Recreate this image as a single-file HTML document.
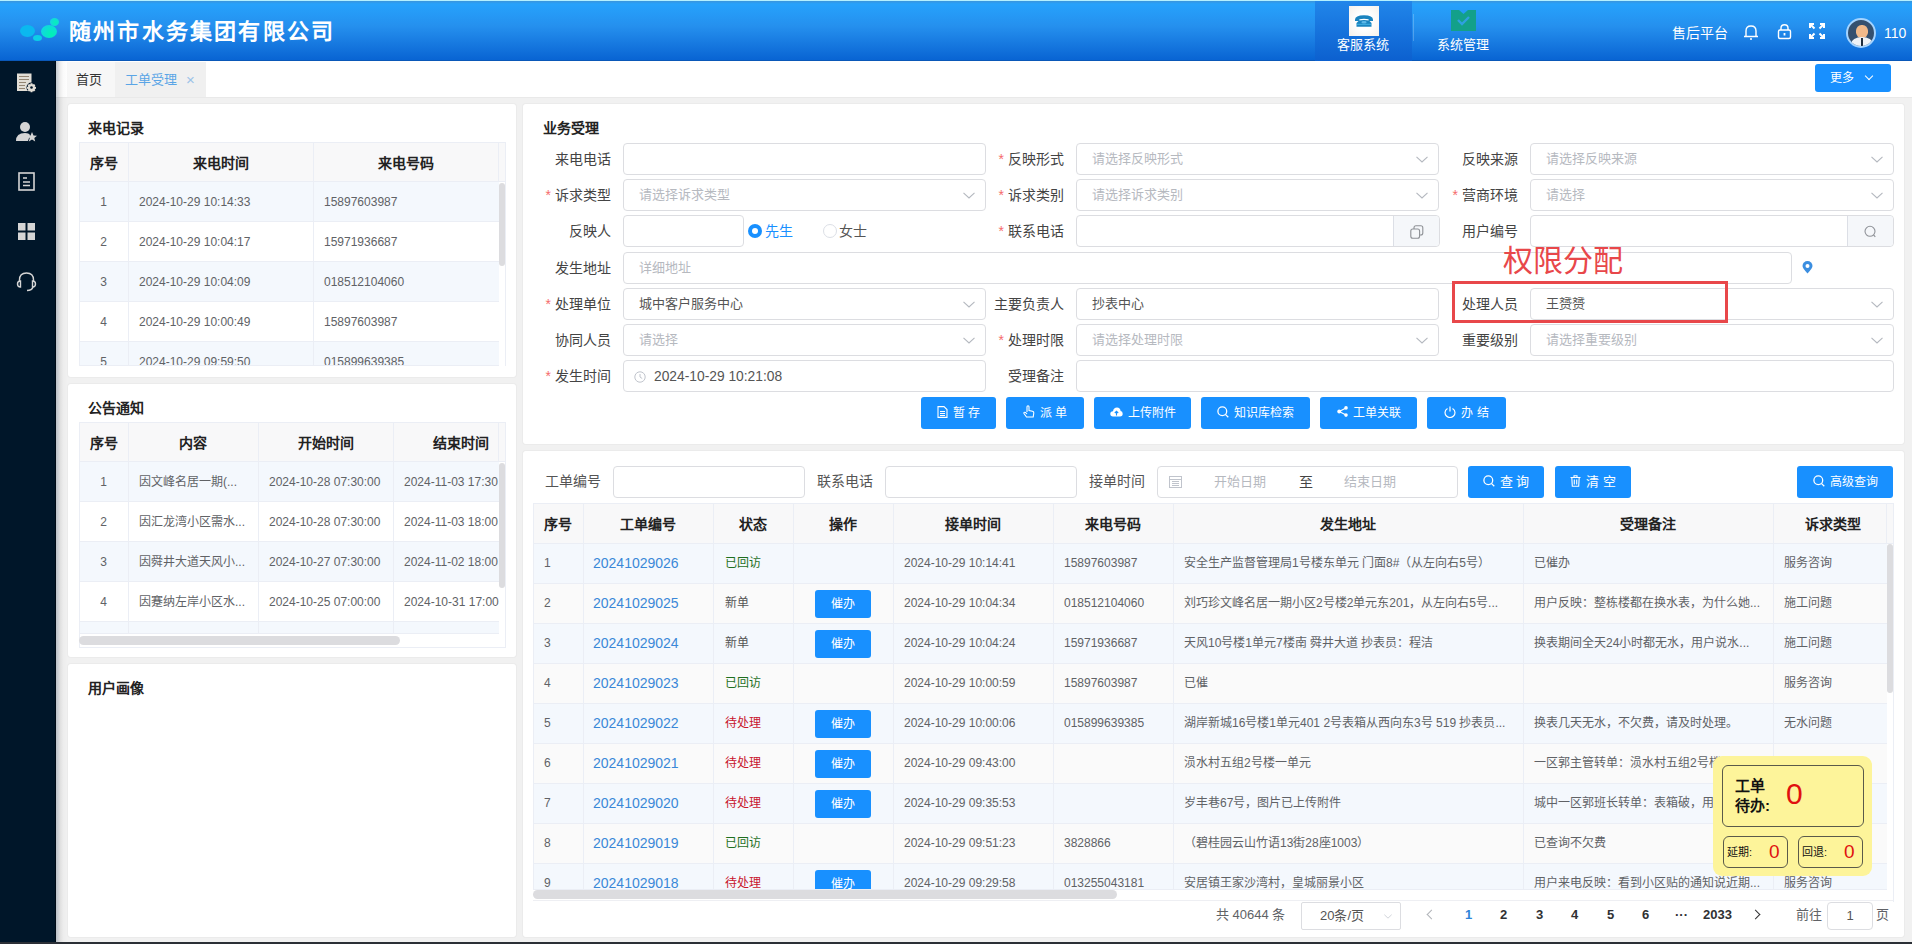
<!DOCTYPE html><html lang="zh-CN"><head><meta charset="utf-8"><style>
*{box-sizing:border-box;margin:0;padding:0}
html,body{width:1912px;height:944px;overflow:hidden;background:#f1f1f1;font-family:"Liberation Sans",sans-serif;color:#606266}
.ab{position:absolute}
.hdr{left:0;top:0;width:1912px;height:61px;background:linear-gradient(#3a95dc 0px,#26a2fc 3px,#2590ee 25px,#1576de 45px,#0864d3 100%);border-top:1px solid #b4f0ff;border-bottom:1px solid #0a58b8}
.side{left:0;top:61px;width:56px;height:883px;background:#001629;border-right:1px solid #000b16}
.tabs{left:56px;top:61px;width:1856px;height:37px;background:#fff;border-bottom:1px solid #e9e9e9}
.pnl{background:#fff;border-radius:3px;box-shadow:0 0 0 1px #ebebeb}
.t14b{font-size:14px;font-weight:bold;color:#222}
.tbl{border:1px solid #ebeef5;overflow:hidden}
.cell{position:absolute;white-space:nowrap;overflow:hidden}
.lbl{position:absolute;font-size:14px;color:#444;text-align:right;line-height:32px;height:32px;white-space:nowrap}
.star{color:#f56c6c;margin-right:4px}
.inp{position:absolute;height:32px;border:1px solid #dcdde1;border-radius:4px;background:#fff;font-size:13px;line-height:30px;padding-left:15px;white-space:nowrap;color:#555}
.ph{color:#b6b9bf}
.arr{position:absolute;right:10px;top:12px;width:12px;height:7px}
.btn{position:absolute;height:32px;background:#1890ff;border-radius:3px;color:#fff;font-weight:500;font-size:12px;line-height:32px;text-align:center;white-space:nowrap}
.th{position:absolute;font-size:14px;font-weight:bold;color:#222;text-align:center;white-space:nowrap}
.td{position:absolute;font-size:12px;color:#555;white-space:nowrap;overflow:hidden}
</style></head><body>
<div class="ab hdr"></div>
<div class="ab" style="left:20px;top:25px;width:15px;height:12px;border-radius:50%;background:#0bb8ef"></div>
<div class="ab" style="left:33px;top:35px;width:9px;height:6px;border-radius:50%;background:#0ccfe6"></div>
<div class="ab" style="left:41px;top:25px;width:16px;height:13px;border-radius:50%;background:radial-gradient(circle at 65% 70%,#00f2b4,#12d6e2 80%)"></div>
<div class="ab" style="left:50px;top:18px;width:9px;height:8px;border-radius:50%;background:radial-gradient(circle at 60% 55%,#06eebb,#18d2e6 90%)"></div>
<div class="ab" style="left:69px;top:16px;font-size:22px;font-weight:bold;color:#fff;letter-spacing:2.2px;line-height:32px">随州市水务集团有限公司</div>
<div class="ab" style="left:1315px;top:1px;width:97px;height:60px;background:linear-gradient(#2186ea,#0c60cf)"></div>
<div class="ab" style="left:1413px;top:14px;width:1px;height:27px;background:rgba(255,255,255,0.22)"></div>
<div class="ab" style="left:1349px;top:6px;width:30px;height:30px;background:radial-gradient(circle,#ffffff 40%,#f6f1ea 100%)"></div>
<svg class="ab" style="left:1355px;top:15px" width="18" height="12" viewBox="0 0 18 12"><path d="M0 4.8 Q0 0.3 9 0.3 Q18 0.3 18 4.8 L18 6 L13.6 6 L13.6 4.2 Q9 3.2 4.4 4.2 L4.4 6 L0 6 Z" fill="#1b84bf"/><path d="M4 5.6 Q9 4.3 14 5.6 L16.5 8 L16.5 11.7 L1.5 11.7 L1.5 8 Z" fill="#1b84bf"/><path d="M2 9.3 H16" stroke="#4fc0ee" stroke-width="0.8"/><ellipse cx="9" cy="7.3" rx="2.6" ry="1.2" fill="#5cb8e8"/></svg>
<div class="ab" style="left:1337px;top:37px;font-size:13px;font-weight:500;color:#fff;line-height:16px">客服系统</div>
<svg class="ab" style="left:1451px;top:10px" width="25" height="21" viewBox="0 0 25 21"><path d="M0 0 L8 0 L12.5 4 L17 0 L25 0 L25 21 L0 21 Z" fill="#13a08a"/><path d="M7 10 L11 14 L18 7" stroke="#2fa0e0" stroke-width="2.4" fill="none"/></svg>
<div class="ab" style="left:1437px;top:37px;font-size:13px;font-weight:500;color:#fff;line-height:16px">系统管理</div>
<div class="ab" style="left:1672px;top:25px;font-size:14px;font-weight:500;color:#fff;line-height:17px">售后平台</div>
<svg class="ab" style="left:1742px;top:23px" width="18" height="18" viewBox="0 0 18 18" fill="none" stroke="#fff" stroke-width="1.4"><path d="M4 13 L4 8 Q4 3 9 3 Q14 3 14 8 L14 13 M2 13.5 L16 13.5"/><path d="M8 16 L10 16"/></svg>
<svg class="ab" style="left:1776px;top:23px" width="17" height="17" viewBox="0 0 17 17" fill="none" stroke="#fff" stroke-width="1.4"><path d="M5 7 L5 5 Q5 1.8 8.5 1.8 Q12 1.8 12 5 L12 7"/><rect x="2.5" y="7" width="12" height="8.5" rx="1.5"/><path d="M8.5 10 L8.5 12.5" stroke-width="1.8"/></svg>
<svg class="ab" style="left:1808px;top:22px" width="18" height="18" viewBox="0 0 18 18" fill="none" stroke="#fff" stroke-width="2"><path d="M2 6 L2 2 L6 2 M2 2 L6.5 6.5"/><path d="M12 2 L16 2 L16 6 M16 2 L11.5 6.5"/><path d="M2 12 L2 16 L6 16 M2 16 L6.5 11.5"/><path d="M16 12 L16 16 L12 16 M16 16 L11.5 11.5"/></svg>
<div class="ab" style="left:1846px;top:18px;width:30px;height:30px;border-radius:50%;background:#34506f;border:2px solid #a5d4ff;overflow:hidden"><div class="ab" style="left:8px;top:5px;width:12px;height:13px;border-radius:45%;background:#f0b98a"></div><div class="ab" style="left:3px;top:17px;width:22px;height:14px;border-radius:50% 50% 0 0;background:#eef2f6"></div><div class="ab" style="left:13px;top:18px;width:2px;height:10px;background:#1d2c3c"></div></div>
<div class="ab" style="left:1884px;top:25px;font-size:14px;color:#fff;line-height:17px">110</div>
<div class="ab side"></div>
<svg class="ab" style="left:16px;top:73px" width="21" height="20" viewBox="0 0 21 20"><rect x="1" y="0.5" width="14.5" height="17.5" fill="#e2ded6"/><path d="M3 3.5h10M3 6.5h10M3 9.5h7M3 12.5h6M3 15.5h6" stroke="#8a7a66" stroke-width="0.9"/><g transform="translate(15.5 14.5)"><circle r="5" fill="#001629"/><path d="M-0.9 -4.2h1.8l0.4 1.3 1.2 -0.6 1.3 1.3 -0.6 1.2 1.3 0.4v1.8l-1.3 0.4 0.6 1.2 -1.3 1.3 -1.2 -0.6 -0.4 1.3h-1.8l-0.4 -1.3 -1.2 0.6 -1.3 -1.3 0.6 -1.2 -1.3 -0.4v-1.8l1.3 -0.4 -0.6 -1.2 1.3 -1.3 1.2 0.6z" fill="#e2ded6"/><circle r="1.3" fill="#001629"/></g></svg>
<svg class="ab" style="left:16px;top:121px" width="22" height="21" viewBox="0 0 22 21"><circle cx="9" cy="6" r="5" fill="#d5d5d5"/><path d="M0 20 Q0 12 9 12 Q13 12 14 14 L12 20 Z" fill="#d5d5d5"/><path d="M16 11 L17.5 14.5 L21 14.8 L18.3 17 L19.2 20.5 L16 18.5 L12.8 20.5 L13.7 17 L11 14.8 L14.5 14.5 Z" fill="#d5d5d5"/></svg>
<svg class="ab" style="left:18px;top:172px" width="17" height="19" viewBox="0 0 17 19" fill="none" stroke="#d5d5d5" stroke-width="1.6"><rect x="1" y="1" width="15" height="17"/><path d="M5 6h4M5 10h7M5 13.5h7"/></svg>
<svg class="ab" style="left:18px;top:223px" width="17" height="17" viewBox="0 0 17 17" fill="#d5d5d5"><rect x="0" y="0" width="7.5" height="7.5"/><rect x="9.5" y="0" width="7.5" height="7.5"/><rect x="0" y="9.5" width="7.5" height="7.5"/><rect x="9.5" y="9.5" width="7.5" height="7.5"/></svg>
<svg class="ab" style="left:16px;top:271px" width="21" height="21" viewBox="0 0 21 21" fill="none" stroke="#d5d5d5" stroke-width="1.4"><path d="M3.5 11 L3.5 9 Q3.5 2 10.5 2 Q17.5 2 17.5 9 L17.5 11"/><path d="M4.5 10 Q1.5 10 1.5 13 Q1.5 16 4.5 16 Z"/><path d="M16.5 10 Q19.5 10 19.5 13 Q19.5 16 16.5 16 Z"/><path d="M17 16 Q16 19.5 11 19.5"/></svg>
<div class="ab tabs"></div>
<div class="ab" style="left:67px;top:62px;width:48px;height:35px;background:#f7f7f7"></div>
<div class="ab" style="left:76px;top:71px;font-size:13px;color:#333;line-height:18px">首页</div>
<div class="ab" style="left:115px;top:62px;width:91px;height:35px;background:#f0f0f0"></div>
<div class="ab" style="left:125px;top:71px;font-size:13px;color:#5aa5e6;line-height:18px">工单受理</div>
<div class="ab" style="left:186px;top:71px;font-size:15px;color:#9cc3e8;line-height:18px">×</div>
<div class="ab" style="left:56px;top:61px;width:12px;height:883px;background:linear-gradient(90deg,rgba(20,50,80,0.26),rgba(0,0,0,0.07) 35%,rgba(0,0,0,0.02) 60%,rgba(0,0,0,0))"></div>
<div class="btn" style="left:1815px;top:64px;width:76px;height:28px;line-height:28px;font-size:12px;border-radius:3px;padding-right:4px">更多 <span style="display:inline-block;width:6px;height:6px;border-right:1.3px solid #fff;border-bottom:1.3px solid #fff;transform:rotate(45deg);margin-left:9px;position:relative;top:-3px"></span></div>
<div class="ab pnl" style="left:68px;top:104px;width:448px;height:273px"></div>
<div class="ab t14b" style="left:88px;top:119px;line-height:18px">来电记录</div>
<div class="ab" style="left:79px;top:142px;width:427px;height:40px;background:#f8f8f9;border-top:1px solid #ebeef5;border-bottom:1px solid #ebeef5"></div>
<div class="ab" style="left:79px;top:182px;width:420px;height:40px;background:#f4f8fd;border-bottom:1px solid #ebeef5;overflow:hidden">
<div class="cell" style="left:0px;top:0px;width:49px;height:40px;line-height:40px;font-size:12px;color:#606266;text-align:center;padding-left:0px">1</div>
<div class="cell" style="left:49px;top:0px;width:185px;height:40px;line-height:40px;font-size:12px;color:#606266;text-align:left;padding-left:11px">2024-10-29 10:14:33</div>
<div class="cell" style="left:234px;top:0px;width:185px;height:40px;line-height:40px;font-size:12px;color:#606266;text-align:left;padding-left:11px">15897603987</div>
</div>
<div class="ab" style="left:79px;top:222px;width:420px;height:40px;background:#fff;border-bottom:1px solid #ebeef5;overflow:hidden">
<div class="cell" style="left:0px;top:0px;width:49px;height:40px;line-height:40px;font-size:12px;color:#606266;text-align:center;padding-left:0px">2</div>
<div class="cell" style="left:49px;top:0px;width:185px;height:40px;line-height:40px;font-size:12px;color:#606266;text-align:left;padding-left:11px">2024-10-29 10:04:17</div>
<div class="cell" style="left:234px;top:0px;width:185px;height:40px;line-height:40px;font-size:12px;color:#606266;text-align:left;padding-left:11px">15971936687</div>
</div>
<div class="ab" style="left:79px;top:262px;width:420px;height:40px;background:#f4f8fd;border-bottom:1px solid #ebeef5;overflow:hidden">
<div class="cell" style="left:0px;top:0px;width:49px;height:40px;line-height:40px;font-size:12px;color:#606266;text-align:center;padding-left:0px">3</div>
<div class="cell" style="left:49px;top:0px;width:185px;height:40px;line-height:40px;font-size:12px;color:#606266;text-align:left;padding-left:11px">2024-10-29 10:04:09</div>
<div class="cell" style="left:234px;top:0px;width:185px;height:40px;line-height:40px;font-size:12px;color:#606266;text-align:left;padding-left:11px">018512104060</div>
</div>
<div class="ab" style="left:79px;top:302px;width:420px;height:40px;background:#fff;border-bottom:1px solid #ebeef5;overflow:hidden">
<div class="cell" style="left:0px;top:0px;width:49px;height:40px;line-height:40px;font-size:12px;color:#606266;text-align:center;padding-left:0px">4</div>
<div class="cell" style="left:49px;top:0px;width:185px;height:40px;line-height:40px;font-size:12px;color:#606266;text-align:left;padding-left:11px">2024-10-29 10:00:49</div>
<div class="cell" style="left:234px;top:0px;width:185px;height:40px;line-height:40px;font-size:12px;color:#606266;text-align:left;padding-left:11px">15897603987</div>
</div>
<div class="ab" style="left:79px;top:342px;width:420px;height:24px;background:#f4f8fd;border-bottom:1px solid #ebeef5;overflow:hidden">
<div class="cell" style="left:0px;top:0px;width:49px;height:40px;line-height:40px;font-size:12px;color:#606266;text-align:center;padding-left:0px">5</div>
<div class="cell" style="left:49px;top:0px;width:185px;height:40px;line-height:40px;font-size:12px;color:#606266;text-align:left;padding-left:11px">2024-10-29 09:59:50</div>
<div class="cell" style="left:234px;top:0px;width:185px;height:40px;line-height:40px;font-size:12px;color:#606266;text-align:left;padding-left:11px">015899639385</div>
</div>
<div class="ab" style="left:128px;top:142px;width:1px;height:224px;background:#ebeef5"></div>
<div class="ab" style="left:313px;top:142px;width:1px;height:224px;background:#ebeef5"></div>
<div class="ab" style="left:79px;top:142px;width:1px;height:224px;background:#ebeef5"></div>
<div class="ab" style="left:505px;top:142px;width:1px;height:224px;background:#ebeef5"></div>
<div class="th" style="left:79px;top:143px;width:49px;height:40px;line-height:40px">序号</div>
<div class="th" style="left:128px;top:143px;width:185px;height:40px;line-height:40px">来电时间</div>
<div class="th" style="left:313px;top:143px;width:185px;height:40px;line-height:40px">来电号码</div>
<div class="ab" style="left:498px;top:142px;width:1px;height:40px;background:#ebeef5"></div>
<div class="ab" style="left:499px;top:183px;width:6px;height:83px;border-radius:3px;background:#dcdcdf"></div>
<div class="ab pnl" style="left:68px;top:384px;width:448px;height:273px"></div>
<div class="ab t14b" style="left:88px;top:399px;line-height:18px">公告通知</div>
<div class="ab" style="left:79px;top:422px;width:427px;height:40px;background:#f8f8f9;border-top:1px solid #ebeef5;border-bottom:1px solid #ebeef5"></div>
<div class="ab" style="left:79px;top:462px;width:420px;height:40px;background:#f4f8fd;border-bottom:1px solid #ebeef5;overflow:hidden">
<div class="cell" style="left:0px;top:0px;width:49px;height:40px;line-height:40px;font-size:12px;color:#606266;text-align:center;padding-left:0px">1</div>
<div class="cell" style="left:49px;top:0px;width:130px;height:40px;line-height:40px;font-size:12px;color:#606266;text-align:left;padding-left:11px">因文峰名居一期(...</div>
<div class="cell" style="left:179px;top:0px;width:135px;height:40px;line-height:40px;font-size:12px;color:#606266;text-align:left;padding-left:11px">2024-10-28 07:30:00</div>
<div class="cell" style="left:314px;top:0px;width:106px;height:40px;line-height:40px;font-size:12px;color:#606266;text-align:left;padding-left:11px">2024-11-03 17:30</div>
</div>
<div class="ab" style="left:79px;top:502px;width:420px;height:40px;background:#fff;border-bottom:1px solid #ebeef5;overflow:hidden">
<div class="cell" style="left:0px;top:0px;width:49px;height:40px;line-height:40px;font-size:12px;color:#606266;text-align:center;padding-left:0px">2</div>
<div class="cell" style="left:49px;top:0px;width:130px;height:40px;line-height:40px;font-size:12px;color:#606266;text-align:left;padding-left:11px">因汇龙湾小区需水...</div>
<div class="cell" style="left:179px;top:0px;width:135px;height:40px;line-height:40px;font-size:12px;color:#606266;text-align:left;padding-left:11px">2024-10-28 07:30:00</div>
<div class="cell" style="left:314px;top:0px;width:106px;height:40px;line-height:40px;font-size:12px;color:#606266;text-align:left;padding-left:11px">2024-11-03 18:00</div>
</div>
<div class="ab" style="left:79px;top:542px;width:420px;height:40px;background:#f4f8fd;border-bottom:1px solid #ebeef5;overflow:hidden">
<div class="cell" style="left:0px;top:0px;width:49px;height:40px;line-height:40px;font-size:12px;color:#606266;text-align:center;padding-left:0px">3</div>
<div class="cell" style="left:49px;top:0px;width:130px;height:40px;line-height:40px;font-size:12px;color:#606266;text-align:left;padding-left:11px">因舜井大道天风小...</div>
<div class="cell" style="left:179px;top:0px;width:135px;height:40px;line-height:40px;font-size:12px;color:#606266;text-align:left;padding-left:11px">2024-10-27 07:30:00</div>
<div class="cell" style="left:314px;top:0px;width:106px;height:40px;line-height:40px;font-size:12px;color:#606266;text-align:left;padding-left:11px">2024-11-02 18:00</div>
</div>
<div class="ab" style="left:79px;top:582px;width:420px;height:40px;background:#fff;border-bottom:1px solid #ebeef5;overflow:hidden">
<div class="cell" style="left:0px;top:0px;width:49px;height:40px;line-height:40px;font-size:12px;color:#606266;text-align:center;padding-left:0px">4</div>
<div class="cell" style="left:49px;top:0px;width:130px;height:40px;line-height:40px;font-size:12px;color:#606266;text-align:left;padding-left:11px">因蹇纳左岸小区水...</div>
<div class="cell" style="left:179px;top:0px;width:135px;height:40px;line-height:40px;font-size:12px;color:#606266;text-align:left;padding-left:11px">2024-10-25 07:00:00</div>
<div class="cell" style="left:314px;top:0px;width:106px;height:40px;line-height:40px;font-size:12px;color:#606266;text-align:left;padding-left:11px">2024-10-31 17:00</div>
</div>
<div class="ab" style="left:79px;top:622px;width:420px;height:12px;background:#f4f8fd;border-bottom:1px solid #ebeef5;overflow:hidden">
<div class="cell" style="left:0px;top:0px;width:49px;height:40px;line-height:40px;font-size:12px;color:#606266;text-align:center;padding-left:0px"></div>
<div class="cell" style="left:49px;top:0px;width:130px;height:40px;line-height:40px;font-size:12px;color:#606266;text-align:left;padding-left:11px"></div>
<div class="cell" style="left:179px;top:0px;width:135px;height:40px;line-height:40px;font-size:12px;color:#606266;text-align:left;padding-left:11px"></div>
<div class="cell" style="left:314px;top:0px;width:106px;height:40px;line-height:40px;font-size:12px;color:#606266;text-align:left;padding-left:11px"></div>
</div>
<div class="ab" style="left:128px;top:422px;width:1px;height:212px;background:#ebeef5"></div>
<div class="ab" style="left:258px;top:422px;width:1px;height:212px;background:#ebeef5"></div>
<div class="ab" style="left:393px;top:422px;width:1px;height:212px;background:#ebeef5"></div>
<div class="ab" style="left:79px;top:422px;width:1px;height:226px;background:#ebeef5"></div>
<div class="ab" style="left:505px;top:422px;width:1px;height:226px;background:#ebeef5"></div>
<div class="ab" style="left:79px;top:647px;width:427px;height:1px;background:#ebeef5"></div>
<div class="th" style="left:79px;top:423px;width:49px;height:40px;line-height:40px">序号</div>
<div class="th" style="left:128px;top:423px;width:130px;height:40px;line-height:40px">内容</div>
<div class="th" style="left:258px;top:423px;width:135px;height:40px;line-height:40px">开始时间</div>
<div class="th" style="left:393px;top:423px;width:135px;height:40px;line-height:40px">结束时间</div>
<div class="ab" style="left:498px;top:422px;width:1px;height:40px;background:#ebeef5"></div>
<div class="ab" style="left:499px;top:463px;width:6px;height:125px;border-radius:3px;background:#dcdcdf"></div>
<div class="ab" style="left:79px;top:636px;width:321px;height:9px;border-radius:5px;background:#dcdcdf"></div>
<div class="ab pnl" style="left:68px;top:664px;width:448px;height:273px"></div>
<div class="ab t14b" style="left:88px;top:679px;line-height:18px">用户画像</div>
<div class="ab pnl" style="left:523px;top:104px;width:1381px;height:340px"></div>
<div class="ab t14b" style="left:543px;top:119px;line-height:18px">业务受理</div>
<div class="lbl" style="left:411px;width:200px;top:143px">来电电话</div>
<div class="inp" style="left:623px;top:143px;width:363px"><span class="ph"></span></div>
<div class="lbl" style="left:864px;width:200px;top:143px"><span class="star">*</span>反映形式</div>
<div class="inp" style="left:1076px;top:143px;width:363px"><span class="ph">请选择反映形式</span><svg class="arr" viewBox="0 0 12 7"><path d="M0.5 0.8 L6 6 L11.5 0.8" fill="none" stroke="#b4b8bf" stroke-width="1.1"/></svg></div>
<div class="lbl" style="left:1318px;width:200px;top:143px">反映来源</div>
<div class="inp" style="left:1530px;top:143px;width:364px"><span class="ph">请选择反映来源</span><svg class="arr" viewBox="0 0 12 7"><path d="M0.5 0.8 L6 6 L11.5 0.8" fill="none" stroke="#b4b8bf" stroke-width="1.1"/></svg></div>
<div class="lbl" style="left:411px;width:200px;top:179px"><span class="star">*</span>诉求类型</div>
<div class="inp" style="left:623px;top:179px;width:363px"><span class="ph">请选择诉求类型</span><svg class="arr" viewBox="0 0 12 7"><path d="M0.5 0.8 L6 6 L11.5 0.8" fill="none" stroke="#b4b8bf" stroke-width="1.1"/></svg></div>
<div class="lbl" style="left:864px;width:200px;top:179px"><span class="star">*</span>诉求类别</div>
<div class="inp" style="left:1076px;top:179px;width:363px"><span class="ph">请选择诉求类别</span><svg class="arr" viewBox="0 0 12 7"><path d="M0.5 0.8 L6 6 L11.5 0.8" fill="none" stroke="#b4b8bf" stroke-width="1.1"/></svg></div>
<div class="lbl" style="left:1318px;width:200px;top:179px"><span class="star">*</span>营商环境</div>
<div class="inp" style="left:1530px;top:179px;width:364px"><span class="ph">请选择</span><svg class="arr" viewBox="0 0 12 7"><path d="M0.5 0.8 L6 6 L11.5 0.8" fill="none" stroke="#b4b8bf" stroke-width="1.1"/></svg></div>
<div class="lbl" style="left:411px;width:200px;top:215px">反映人</div>
<div class="inp" style="left:623px;top:215px;width:121px"><span class="ph"></span></div>
<div class="ab" style="left:748px;top:224px;width:14px;height:14px;border-radius:50%;background:#1890ff"></div>
<div class="ab" style="left:752px;top:228px;width:6px;height:6px;border-radius:50%;background:#fff"></div>
<div class="ab" style="left:765px;top:222px;font-size:14px;color:#1890ff;line-height:18px">先生</div>
<div class="ab" style="left:823px;top:224px;width:14px;height:14px;border-radius:50%;border:1px solid #dcdfe6;background:#fff"></div>
<div class="ab" style="left:839px;top:222px;font-size:14px;color:#555;line-height:18px">女士</div>
<div class="lbl" style="left:864px;width:200px;top:215px"><span class="star">*</span>联系电话</div>
<div class="inp" style="left:1076px;top:215px;width:364px"></div>
<div class="ab" style="left:1393px;top:216px;width:46px;height:30px;background:#f5f7fa;border-left:1px solid #dcdfe6;border-radius:0 4px 4px 0"></div>
<svg class="ab" style="left:1410px;top:225px" width="14" height="14" viewBox="0 0 14 14" fill="none" stroke="#8e9196" stroke-width="1.1"><rect x="4" y="0.8" width="8.8" height="9.2" rx="2"/><rect x="0.8" y="4" width="8.8" height="9.2" rx="2" fill="#f5f7fa"/></svg>
<div class="lbl" style="left:1318px;width:200px;top:215px">用户编号</div>
<div class="inp" style="left:1530px;top:215px;width:364px"></div>
<div class="ab" style="left:1847px;top:216px;width:46px;height:30px;background:#f5f7fa;border-left:1px solid #dcdfe6;border-radius:0 4px 4px 0"></div>
<svg class="ab" style="left:1864px;top:225px" width="14" height="14" viewBox="0 0 14 14" fill="none" stroke="#909399" stroke-width="1.1"><circle cx="6" cy="6.3" r="5"/><path d="M9.6 10 L11.3 11.8"/></svg>
<div class="lbl" style="left:411px;width:200px;top:252px">发生地址</div>
<div class="inp" style="left:623px;top:252px;width:1169px"><span class="ph">详细地址</span></div>
<svg class="ab" style="left:1802px;top:261px" width="11" height="13" viewBox="0 0 11 13"><path d="M5.5 12.5 Q0.5 7 0.5 5 A5 5 0 0 1 10.5 5 Q10.5 7 5.5 12.5 Z" fill="#3b8ee0"/><circle cx="5.5" cy="5" r="2" fill="#fff"/></svg>
<div class="lbl" style="left:411px;width:200px;top:288px"><span class="star">*</span>处理单位</div>
<div class="inp" style="left:623px;top:288px;width:363px"><span class="">城中客户服务中心</span><svg class="arr" viewBox="0 0 12 7"><path d="M0.5 0.8 L6 6 L11.5 0.8" fill="none" stroke="#b4b8bf" stroke-width="1.1"/></svg></div>
<div class="lbl" style="left:864px;width:200px;top:288px">主要负责人</div>
<div class="inp" style="left:1076px;top:288px;width:363px"><span class="">抄表中心</span></div>
<div class="lbl" style="left:1318px;width:200px;top:288px">处理人员</div>
<div class="inp" style="left:1530px;top:288px;width:364px"><span class="">王赟赟</span><svg class="arr" viewBox="0 0 12 7"><path d="M0.5 0.8 L6 6 L11.5 0.8" fill="none" stroke="#b4b8bf" stroke-width="1.1"/></svg></div>
<div class="lbl" style="left:411px;width:200px;top:324px">协同人员</div>
<div class="inp" style="left:623px;top:324px;width:363px"><span class="ph">请选择</span><svg class="arr" viewBox="0 0 12 7"><path d="M0.5 0.8 L6 6 L11.5 0.8" fill="none" stroke="#b4b8bf" stroke-width="1.1"/></svg></div>
<div class="lbl" style="left:864px;width:200px;top:324px"><span class="star">*</span>处理时限</div>
<div class="inp" style="left:1076px;top:324px;width:363px"><span class="ph">请选择处理时限</span><svg class="arr" viewBox="0 0 12 7"><path d="M0.5 0.8 L6 6 L11.5 0.8" fill="none" stroke="#b4b8bf" stroke-width="1.1"/></svg></div>
<div class="lbl" style="left:1318px;width:200px;top:324px">重要级别</div>
<div class="inp" style="left:1530px;top:324px;width:364px"><span class="ph">请选择重要级别</span><svg class="arr" viewBox="0 0 12 7"><path d="M0.5 0.8 L6 6 L11.5 0.8" fill="none" stroke="#b4b8bf" stroke-width="1.1"/></svg></div>
<div class="lbl" style="left:411px;width:200px;top:360px"><span class="star">*</span>发生时间</div>
<div class="inp" style="left:623px;top:360px;width:363px;padding-left:30px;font-size:13.8px;line-height:32px">2024-10-29 10:21:08</div>
<svg class="ab" style="left:634px;top:371px" width="12" height="12" viewBox="0 0 12 12" fill="none" stroke="#c0c4cc" stroke-width="1"><circle cx="6" cy="6" r="5.2"/><path d="M6 3 L6 6 L8.2 7.5"/></svg>
<div class="lbl" style="left:864px;width:200px;top:360px">受理备注</div>
<div class="inp" style="left:1076px;top:360px;width:818px"><span class="ph"></span></div>
<div class="ab" style="left:1452px;top:281px;width:276px;height:42px;border:3px solid #e8474a"></div>
<div class="ab" style="left:1503px;top:243px;font-size:30px;color:#e8474a;line-height:36px">权限分配</div>
<div class="btn" style="left:921px;top:397px;width:75px"><span style="display:inline-block;vertical-align:middle;margin-right:5px;position:relative;top:-2px;line-height:0"><svg width="11" height="12" viewBox="0 0 11 12" fill="none" stroke="#fff" stroke-width="1.1"><path d="M1 0.6 L7 0.6 L10 3.6 L10 11.4 L1 11.4 Z"/><path d="M3 5.5h5M3 7.5h5M3 9.5h5"/></svg></span>暂 存</div>
<div class="btn" style="left:1006px;top:397px;width:78px"><span style="display:inline-block;vertical-align:middle;margin-right:5px;position:relative;top:-2px;line-height:0"><svg width="12" height="13" viewBox="0 0 12 13" fill="none" stroke="#fff" stroke-width="1.1"><path d="M4 7 L4 1.8 Q4 0.8 5 0.8 Q6 0.8 6 1.8 L6 5.5 L9.5 6.3 Q11 6.7 10.8 8 L10.2 12 L3.5 12 L1 8.5 Q0.6 7.6 1.5 7.3 Q2.3 7 3 7.8 L4 8.8"/></svg></span>派 单</div>
<div class="btn" style="left:1094px;top:397px;width:97px"><span style="display:inline-block;vertical-align:middle;margin-right:5px;position:relative;top:-2px;line-height:0"><svg width="13" height="10" viewBox="0 0 13 10"><path d="M3 9.5 Q0.3 9.5 0.3 6.8 Q0.3 4.3 3 4.2 Q3.6 0.5 7 0.5 Q10.3 0.5 10.6 4 Q12.7 4.3 12.7 6.8 Q12.7 9.5 10 9.5 Z" fill="#fff"/><path d="M6.5 8.5 L6.5 4.5 M4.8 6 L6.5 4.3 L8.2 6" stroke="#1890ff" stroke-width="1.1" fill="none"/></svg></span>上传附件</div>
<div class="btn" style="left:1201px;top:397px;width:109px"><span style="display:inline-block;vertical-align:middle;margin-right:5px;position:relative;top:-2px;line-height:0"><svg width="12" height="12" viewBox="0 0 12 12" fill="none" stroke="#fff" stroke-width="1.3"><circle cx="5.3" cy="5.3" r="4.4"/><path d="M8.6 8.6 L11.3 11.3"/></svg></span>知识库检索</div>
<div class="btn" style="left:1320px;top:397px;width:97px"><span style="display:inline-block;vertical-align:middle;margin-right:5px;position:relative;top:-2px;line-height:0"><svg width="11" height="11" viewBox="0 0 11 11" fill="#fff"><circle cx="2.2" cy="5.5" r="1.9"/><circle cx="9" cy="1.9" r="1.8"/><circle cx="9" cy="9.1" r="1.8"/><path d="M2.2 5.5 L9 1.9 M2.2 5.5 L9 9.1" stroke="#fff" stroke-width="1.1"/></svg></span>工单关联</div>
<div class="btn" style="left:1427px;top:397px;width:79px"><span style="display:inline-block;vertical-align:middle;margin-right:5px;position:relative;top:-2px;line-height:0"><svg width="12" height="12" viewBox="0 0 12 12" fill="none" stroke="#fff" stroke-width="1.2"><path d="M3.5 2.5 Q1 4 1 6.5 A5 5 0 0 0 11 6.5 Q11 4 8.5 2.5"/><path d="M6 0.6 L6 5.5"/></svg></span>办 结</div>
<div class="ab pnl" style="left:523px;top:451px;width:1381px;height:486px"></div>
<div class="ab" style="left:545px;top:472px;font-size:14px;color:#555;line-height:18px">工单编号</div>
<div class="inp" style="left:613px;top:466px;width:192px"></div>
<div class="ab" style="left:817px;top:472px;font-size:14px;color:#555;line-height:18px">联系电话</div>
<div class="inp" style="left:885px;top:466px;width:192px"></div>
<div class="ab" style="left:1089px;top:472px;font-size:14px;color:#555;line-height:18px">接单时间</div>
<div class="inp" style="left:1157px;top:466px;width:301px"></div>
<svg class="ab" style="left:1169px;top:475px" width="13" height="13" viewBox="0 0 13 13" fill="none" stroke="#c0c4cc" stroke-width="1"><rect x="0.5" y="1.5" width="12" height="11"/><path d="M0.5 4.5h12M3 6.5h7M3 8.5h7M3 10.5h7"/></svg>
<div class="ab ph" style="left:1214px;top:473px;font-size:13px;line-height:18px">开始日期</div>
<div class="ab" style="left:1299px;top:473px;font-size:14px;color:#444;line-height:18px">至</div>
<div class="ab ph" style="left:1344px;top:473px;font-size:13px;line-height:18px">结束日期</div>
<div class="btn" style="left:1468px;top:466px;width:76px;font-size:13px"><span style="display:inline-block;vertical-align:middle;margin-right:5px;position:relative;top:-2px;line-height:0"><svg width="12" height="12" viewBox="0 0 12 12" fill="none" stroke="#fff" stroke-width="1.3"><circle cx="5.3" cy="5.3" r="4.4"/><path d="M8.6 8.6 L11.3 11.3"/></svg></span>查 询</div>
<div class="btn" style="left:1555px;top:466px;width:76px;font-size:13px"><span style="display:inline-block;vertical-align:middle;margin-right:5px;position:relative;top:-2px;line-height:0"><svg width="11" height="12" viewBox="0 0 11 12" fill="none" stroke="#fff" stroke-width="1.1"><path d="M0.5 2.5h10M4 2.5 L4 0.8 L7 0.8 L7 2.5"/><path d="M1.8 2.5 L2.3 11.3 L8.7 11.3 L9.2 2.5"/><path d="M4.3 4.5v5M6.7 4.5v5"/></svg></span>清 空</div>
<div class="btn" style="left:1797px;top:466px;width:96px;font-size:12px"><span style="display:inline-block;vertical-align:middle;margin-right:5px;position:relative;top:-2px;line-height:0"><svg width="12" height="12" viewBox="0 0 12 12" fill="none" stroke="#fff" stroke-width="1.3"><circle cx="5.3" cy="5.3" r="4.4"/><path d="M8.6 8.6 L11.3 11.3"/></svg></span>高级查询</div>
<div class="ab" style="left:533px;top:503px;width:1361px;height:41px;background:#f8f8f9;border-top:1px solid #ebeef5;border-bottom:1px solid #ebeef5"></div>
<div class="ab" style="left:533px;top:544px;width:1354px;height:40px;background:#f4f8fd;border-bottom:1px solid #ebeef5;overflow:hidden">
<div class="cell" style="left:0px;top:-1px;width:50px;height:40px;line-height:40px;font-size:12px;color:#606266;text-align:left;padding-left:11px">1</div>
<div class="cell" style="left:50px;top:0;width:130px;height:40px"><div style="line-height:40px;padding-left:10px;margin-top:-1px"><span style="font-size:14px;color:#3a88d8">20241029026</span></div></div>
<div class="cell" style="left:180px;top:0;width:80px;height:40px"><div style="line-height:40px;padding-left:12px;margin-top:-2px"><span style="font-size:12px;color:#1f6f1f">已回访</span></div></div>
<div class="cell" style="left:260px;top:-1px;width:100px;height:40px;line-height:40px;font-size:12px;color:#606266;text-align:center;padding-left:0px"></div>
<div class="cell" style="left:360px;top:-1px;width:160px;height:40px;line-height:40px;font-size:12px;color:#606266;text-align:left;padding-left:11px">2024-10-29 10:14:41</div>
<div class="cell" style="left:520px;top:-1px;width:120px;height:40px;line-height:40px;font-size:12px;color:#606266;text-align:left;padding-left:11px">15897603987</div>
<div class="cell" style="left:640px;top:-1px;width:350px;height:40px;line-height:40px;font-size:12px;color:#606266;text-align:left;padding-left:11px">安全生产监督管理局1号楼东单元 门面8#（从左向右5号）</div>
<div class="cell" style="left:990px;top:-1px;width:250px;height:40px;line-height:40px;font-size:12px;color:#606266;text-align:left;padding-left:11px">已催办</div>
<div class="cell" style="left:1240px;top:-1px;width:114px;height:40px;line-height:40px;font-size:12px;color:#606266;text-align:left;padding-left:11px">服务咨询</div>
</div>
<div class="ab" style="left:533px;top:584px;width:1354px;height:40px;background:#fafafa;border-bottom:1px solid #ebeef5;overflow:hidden">
<div class="cell" style="left:0px;top:-1px;width:50px;height:40px;line-height:40px;font-size:12px;color:#606266;text-align:left;padding-left:11px">2</div>
<div class="cell" style="left:50px;top:0;width:130px;height:40px"><div style="line-height:40px;padding-left:10px;margin-top:-1px"><span style="font-size:14px;color:#3a88d8">20241029025</span></div></div>
<div class="cell" style="left:180px;top:0;width:80px;height:40px"><div style="line-height:40px;padding-left:12px;margin-top:-2px"><span style="font-size:12px;color:#555">新单</span></div></div>
<div class="cell" style="left:260px;top:0;width:100px;height:40px"><div style="position:absolute;left:22px;top:6px;width:56px;height:28px;background:#1890ff;border-radius:3px;color:#fff;font-weight:500;font-size:12px;line-height:28px;text-align:center">催办</div></div>
<div class="cell" style="left:360px;top:-1px;width:160px;height:40px;line-height:40px;font-size:12px;color:#606266;text-align:left;padding-left:11px">2024-10-29 10:04:34</div>
<div class="cell" style="left:520px;top:-1px;width:120px;height:40px;line-height:40px;font-size:12px;color:#606266;text-align:left;padding-left:11px">018512104060</div>
<div class="cell" style="left:640px;top:-1px;width:350px;height:40px;line-height:40px;font-size:12px;color:#606266;text-align:left;padding-left:11px">刘巧珍文峰名居一期小区2号楼2单元东201，从左向右5号...</div>
<div class="cell" style="left:990px;top:-1px;width:250px;height:40px;line-height:40px;font-size:12px;color:#606266;text-align:left;padding-left:11px">用户反映：整栋楼都在换水表，为什么她...</div>
<div class="cell" style="left:1240px;top:-1px;width:114px;height:40px;line-height:40px;font-size:12px;color:#606266;text-align:left;padding-left:11px">施工问题</div>
</div>
<div class="ab" style="left:533px;top:624px;width:1354px;height:40px;background:#f4f8fd;border-bottom:1px solid #ebeef5;overflow:hidden">
<div class="cell" style="left:0px;top:-1px;width:50px;height:40px;line-height:40px;font-size:12px;color:#606266;text-align:left;padding-left:11px">3</div>
<div class="cell" style="left:50px;top:0;width:130px;height:40px"><div style="line-height:40px;padding-left:10px;margin-top:-1px"><span style="font-size:14px;color:#3a88d8">20241029024</span></div></div>
<div class="cell" style="left:180px;top:0;width:80px;height:40px"><div style="line-height:40px;padding-left:12px;margin-top:-2px"><span style="font-size:12px;color:#555">新单</span></div></div>
<div class="cell" style="left:260px;top:0;width:100px;height:40px"><div style="position:absolute;left:22px;top:6px;width:56px;height:28px;background:#1890ff;border-radius:3px;color:#fff;font-weight:500;font-size:12px;line-height:28px;text-align:center">催办</div></div>
<div class="cell" style="left:360px;top:-1px;width:160px;height:40px;line-height:40px;font-size:12px;color:#606266;text-align:left;padding-left:11px">2024-10-29 10:04:24</div>
<div class="cell" style="left:520px;top:-1px;width:120px;height:40px;line-height:40px;font-size:12px;color:#606266;text-align:left;padding-left:11px">15971936687</div>
<div class="cell" style="left:640px;top:-1px;width:350px;height:40px;line-height:40px;font-size:12px;color:#606266;text-align:left;padding-left:11px">天风10号楼1单元7楼南 舜井大道 抄表员：程洁</div>
<div class="cell" style="left:990px;top:-1px;width:250px;height:40px;line-height:40px;font-size:12px;color:#606266;text-align:left;padding-left:11px">换表期间全天24小时都无水，用户说水...</div>
<div class="cell" style="left:1240px;top:-1px;width:114px;height:40px;line-height:40px;font-size:12px;color:#606266;text-align:left;padding-left:11px">施工问题</div>
</div>
<div class="ab" style="left:533px;top:664px;width:1354px;height:40px;background:#fafafa;border-bottom:1px solid #ebeef5;overflow:hidden">
<div class="cell" style="left:0px;top:-1px;width:50px;height:40px;line-height:40px;font-size:12px;color:#606266;text-align:left;padding-left:11px">4</div>
<div class="cell" style="left:50px;top:0;width:130px;height:40px"><div style="line-height:40px;padding-left:10px;margin-top:-1px"><span style="font-size:14px;color:#3a88d8">20241029023</span></div></div>
<div class="cell" style="left:180px;top:0;width:80px;height:40px"><div style="line-height:40px;padding-left:12px;margin-top:-2px"><span style="font-size:12px;color:#1f6f1f">已回访</span></div></div>
<div class="cell" style="left:260px;top:-1px;width:100px;height:40px;line-height:40px;font-size:12px;color:#606266;text-align:center;padding-left:0px"></div>
<div class="cell" style="left:360px;top:-1px;width:160px;height:40px;line-height:40px;font-size:12px;color:#606266;text-align:left;padding-left:11px">2024-10-29 10:00:59</div>
<div class="cell" style="left:520px;top:-1px;width:120px;height:40px;line-height:40px;font-size:12px;color:#606266;text-align:left;padding-left:11px">15897603987</div>
<div class="cell" style="left:640px;top:-1px;width:350px;height:40px;line-height:40px;font-size:12px;color:#606266;text-align:left;padding-left:11px">已催</div>
<div class="cell" style="left:990px;top:-1px;width:250px;height:40px;line-height:40px;font-size:12px;color:#606266;text-align:left;padding-left:11px"></div>
<div class="cell" style="left:1240px;top:-1px;width:114px;height:40px;line-height:40px;font-size:12px;color:#606266;text-align:left;padding-left:11px">服务咨询</div>
</div>
<div class="ab" style="left:533px;top:704px;width:1354px;height:40px;background:#f4f8fd;border-bottom:1px solid #ebeef5;overflow:hidden">
<div class="cell" style="left:0px;top:-1px;width:50px;height:40px;line-height:40px;font-size:12px;color:#606266;text-align:left;padding-left:11px">5</div>
<div class="cell" style="left:50px;top:0;width:130px;height:40px"><div style="line-height:40px;padding-left:10px;margin-top:-1px"><span style="font-size:14px;color:#3a88d8">20241029022</span></div></div>
<div class="cell" style="left:180px;top:0;width:80px;height:40px"><div style="line-height:40px;padding-left:12px;margin-top:-2px"><span style="font-size:12px;color:#c8142c">待处理</span></div></div>
<div class="cell" style="left:260px;top:0;width:100px;height:40px"><div style="position:absolute;left:22px;top:6px;width:56px;height:28px;background:#1890ff;border-radius:3px;color:#fff;font-weight:500;font-size:12px;line-height:28px;text-align:center">催办</div></div>
<div class="cell" style="left:360px;top:-1px;width:160px;height:40px;line-height:40px;font-size:12px;color:#606266;text-align:left;padding-left:11px">2024-10-29 10:00:06</div>
<div class="cell" style="left:520px;top:-1px;width:120px;height:40px;line-height:40px;font-size:12px;color:#606266;text-align:left;padding-left:11px">015899639385</div>
<div class="cell" style="left:640px;top:-1px;width:350px;height:40px;line-height:40px;font-size:12px;color:#606266;text-align:left;padding-left:11px">湖岸新城16号楼1单元401 2号表箱从西向东3号 519 抄表员...</div>
<div class="cell" style="left:990px;top:-1px;width:250px;height:40px;line-height:40px;font-size:12px;color:#606266;text-align:left;padding-left:11px">换表几天无水，不欠费，请及时处理。</div>
<div class="cell" style="left:1240px;top:-1px;width:114px;height:40px;line-height:40px;font-size:12px;color:#606266;text-align:left;padding-left:11px">无水问题</div>
</div>
<div class="ab" style="left:533px;top:744px;width:1354px;height:40px;background:#fafafa;border-bottom:1px solid #ebeef5;overflow:hidden">
<div class="cell" style="left:0px;top:-1px;width:50px;height:40px;line-height:40px;font-size:12px;color:#606266;text-align:left;padding-left:11px">6</div>
<div class="cell" style="left:50px;top:0;width:130px;height:40px"><div style="line-height:40px;padding-left:10px;margin-top:-1px"><span style="font-size:14px;color:#3a88d8">20241029021</span></div></div>
<div class="cell" style="left:180px;top:0;width:80px;height:40px"><div style="line-height:40px;padding-left:12px;margin-top:-2px"><span style="font-size:12px;color:#c8142c">待处理</span></div></div>
<div class="cell" style="left:260px;top:0;width:100px;height:40px"><div style="position:absolute;left:22px;top:6px;width:56px;height:28px;background:#1890ff;border-radius:3px;color:#fff;font-weight:500;font-size:12px;line-height:28px;text-align:center">催办</div></div>
<div class="cell" style="left:360px;top:-1px;width:160px;height:40px;line-height:40px;font-size:12px;color:#606266;text-align:left;padding-left:11px">2024-10-29 09:43:00</div>
<div class="cell" style="left:520px;top:-1px;width:120px;height:40px;line-height:40px;font-size:12px;color:#606266;text-align:left;padding-left:11px"></div>
<div class="cell" style="left:640px;top:-1px;width:350px;height:40px;line-height:40px;font-size:12px;color:#606266;text-align:left;padding-left:11px">涢水村五组2号楼一单元</div>
<div class="cell" style="left:990px;top:-1px;width:250px;height:40px;line-height:40px;font-size:12px;color:#606266;text-align:left;padding-left:11px">一区郭主管转单：涢水村五组2号楼一单元...</div>
<div class="cell" style="left:1240px;top:-1px;width:114px;height:40px;line-height:40px;font-size:12px;color:#606266;text-align:left;padding-left:11px"></div>
</div>
<div class="ab" style="left:533px;top:784px;width:1354px;height:40px;background:#f4f8fd;border-bottom:1px solid #ebeef5;overflow:hidden">
<div class="cell" style="left:0px;top:-1px;width:50px;height:40px;line-height:40px;font-size:12px;color:#606266;text-align:left;padding-left:11px">7</div>
<div class="cell" style="left:50px;top:0;width:130px;height:40px"><div style="line-height:40px;padding-left:10px;margin-top:-1px"><span style="font-size:14px;color:#3a88d8">20241029020</span></div></div>
<div class="cell" style="left:180px;top:0;width:80px;height:40px"><div style="line-height:40px;padding-left:12px;margin-top:-2px"><span style="font-size:12px;color:#c8142c">待处理</span></div></div>
<div class="cell" style="left:260px;top:0;width:100px;height:40px"><div style="position:absolute;left:22px;top:6px;width:56px;height:28px;background:#1890ff;border-radius:3px;color:#fff;font-weight:500;font-size:12px;line-height:28px;text-align:center">催办</div></div>
<div class="cell" style="left:360px;top:-1px;width:160px;height:40px;line-height:40px;font-size:12px;color:#606266;text-align:left;padding-left:11px">2024-10-29 09:35:53</div>
<div class="cell" style="left:520px;top:-1px;width:120px;height:40px;line-height:40px;font-size:12px;color:#606266;text-align:left;padding-left:11px"></div>
<div class="cell" style="left:640px;top:-1px;width:350px;height:40px;line-height:40px;font-size:12px;color:#606266;text-align:left;padding-left:11px">岁丰巷67号，图片已上传附件</div>
<div class="cell" style="left:990px;top:-1px;width:250px;height:40px;line-height:40px;font-size:12px;color:#606266;text-align:left;padding-left:11px">城中一区郭班长转单：表箱破，用户...</div>
<div class="cell" style="left:1240px;top:-1px;width:114px;height:40px;line-height:40px;font-size:12px;color:#606266;text-align:left;padding-left:11px"></div>
</div>
<div class="ab" style="left:533px;top:824px;width:1354px;height:40px;background:#fafafa;border-bottom:1px solid #ebeef5;overflow:hidden">
<div class="cell" style="left:0px;top:-1px;width:50px;height:40px;line-height:40px;font-size:12px;color:#606266;text-align:left;padding-left:11px">8</div>
<div class="cell" style="left:50px;top:0;width:130px;height:40px"><div style="line-height:40px;padding-left:10px;margin-top:-1px"><span style="font-size:14px;color:#3a88d8">20241029019</span></div></div>
<div class="cell" style="left:180px;top:0;width:80px;height:40px"><div style="line-height:40px;padding-left:12px;margin-top:-2px"><span style="font-size:12px;color:#1f6f1f">已回访</span></div></div>
<div class="cell" style="left:260px;top:-1px;width:100px;height:40px;line-height:40px;font-size:12px;color:#606266;text-align:center;padding-left:0px"></div>
<div class="cell" style="left:360px;top:-1px;width:160px;height:40px;line-height:40px;font-size:12px;color:#606266;text-align:left;padding-left:11px">2024-10-29 09:51:23</div>
<div class="cell" style="left:520px;top:-1px;width:120px;height:40px;line-height:40px;font-size:12px;color:#606266;text-align:left;padding-left:11px">3828866</div>
<div class="cell" style="left:640px;top:-1px;width:350px;height:40px;line-height:40px;font-size:12px;color:#606266;text-align:left;padding-left:11px">（碧桂园云山竹语13街28座1003）</div>
<div class="cell" style="left:990px;top:-1px;width:250px;height:40px;line-height:40px;font-size:12px;color:#606266;text-align:left;padding-left:11px">已查询不欠费</div>
<div class="cell" style="left:1240px;top:-1px;width:114px;height:40px;line-height:40px;font-size:12px;color:#606266;text-align:left;padding-left:11px"></div>
</div>
<div class="ab" style="left:533px;top:864px;width:1354px;height:26px;background:#f4f8fd;border-bottom:1px solid #ebeef5;overflow:hidden">
<div class="cell" style="left:0px;top:-1px;width:50px;height:40px;line-height:40px;font-size:12px;color:#606266;text-align:left;padding-left:11px">9</div>
<div class="cell" style="left:50px;top:0;width:130px;height:40px"><div style="line-height:40px;padding-left:10px;margin-top:-1px"><span style="font-size:14px;color:#3a88d8">20241029018</span></div></div>
<div class="cell" style="left:180px;top:0;width:80px;height:40px"><div style="line-height:40px;padding-left:12px;margin-top:-2px"><span style="font-size:12px;color:#c8142c">待处理</span></div></div>
<div class="cell" style="left:260px;top:0;width:100px;height:40px"><div style="position:absolute;left:22px;top:6px;width:56px;height:28px;background:#1890ff;border-radius:3px;color:#fff;font-weight:500;font-size:12px;line-height:28px;text-align:center">催办</div></div>
<div class="cell" style="left:360px;top:-1px;width:160px;height:40px;line-height:40px;font-size:12px;color:#606266;text-align:left;padding-left:11px">2024-10-29 09:29:58</div>
<div class="cell" style="left:520px;top:-1px;width:120px;height:40px;line-height:40px;font-size:12px;color:#606266;text-align:left;padding-left:11px">013255043181</div>
<div class="cell" style="left:640px;top:-1px;width:350px;height:40px;line-height:40px;font-size:12px;color:#606266;text-align:left;padding-left:11px">安居镇王家沙湾村，皇城丽景小区</div>
<div class="cell" style="left:990px;top:-1px;width:250px;height:40px;line-height:40px;font-size:12px;color:#606266;text-align:left;padding-left:11px">用户来电反映：看到小区贴的通知说近期...</div>
<div class="cell" style="left:1240px;top:-1px;width:114px;height:40px;line-height:40px;font-size:12px;color:#606266;text-align:left;padding-left:11px">服务咨询</div>
</div>
<div class="ab" style="left:583px;top:503px;width:1px;height:387px;background:#ebeef5"></div>
<div class="ab" style="left:713px;top:503px;width:1px;height:387px;background:#ebeef5"></div>
<div class="ab" style="left:793px;top:503px;width:1px;height:387px;background:#ebeef5"></div>
<div class="ab" style="left:893px;top:503px;width:1px;height:387px;background:#ebeef5"></div>
<div class="ab" style="left:1053px;top:503px;width:1px;height:387px;background:#ebeef5"></div>
<div class="ab" style="left:1173px;top:503px;width:1px;height:387px;background:#ebeef5"></div>
<div class="ab" style="left:1523px;top:503px;width:1px;height:387px;background:#ebeef5"></div>
<div class="ab" style="left:1773px;top:503px;width:1px;height:387px;background:#ebeef5"></div>
<div class="ab" style="left:533px;top:503px;width:1px;height:387px;background:#ebeef5"></div>
<div class="ab" style="left:1893px;top:503px;width:1px;height:387px;background:#ebeef5"></div>
<div class="th" style="left:533px;top:504px;width:50px;height:41px;line-height:41px">序号</div>
<div class="th" style="left:583px;top:504px;width:130px;height:41px;line-height:41px">工单编号</div>
<div class="th" style="left:713px;top:504px;width:80px;height:41px;line-height:41px">状态</div>
<div class="th" style="left:793px;top:504px;width:100px;height:41px;line-height:41px">操作</div>
<div class="th" style="left:893px;top:504px;width:160px;height:41px;line-height:41px">接单时间</div>
<div class="th" style="left:1053px;top:504px;width:120px;height:41px;line-height:41px">来电号码</div>
<div class="th" style="left:1173px;top:504px;width:350px;height:41px;line-height:41px">发生地址</div>
<div class="th" style="left:1523px;top:504px;width:250px;height:41px;line-height:41px">受理备注</div>
<div class="th" style="left:1773px;top:504px;width:120px;height:41px;line-height:41px">诉求类型</div>
<div class="ab" style="left:1886px;top:503px;width:1px;height:41px;background:#ebeef5"></div>
<div class="ab" style="left:1887px;top:544px;width:6px;height:149px;border-radius:3px;background:#dcdcdf"></div>
<div class="ab" style="left:533px;top:890px;width:584px;height:9px;border-radius:5px;background:#dcdcdf"></div>
<div class="ab" style="left:533px;top:900px;width:1361px;height:1px;background:#eeeff3"></div>
<div class="ab" style="left:1893px;top:503px;width:1px;height:399px;background:#ebeef5"></div>
<div class="ab" style="left:1216px;top:906px;font-size:13px;color:#606266;line-height:18px">共 40644 条</div>
<div class="inp" style="left:1301px;top:902px;width:100px;height:28px;line-height:26px;font-size:13px;padding-left:18px;border-radius:2px">20条/页<svg class="arr" style="top:11px;right:8px;width:8px;height:5px" viewBox="0 0 12 7"><path d="M0.5 0.8 L6 6 L11.5 0.8" fill="none" stroke="#c0c4cc" stroke-width="1.1"/></svg></div>
<div class="ab" style="left:1428px;top:911px;width:7px;height:7px;border-left:1.3px solid #b0b3b8;border-bottom:1.3px solid #b0b3b8;transform:rotate(45deg)"></div>
<div class="ab" style="left:1465px;top:906px;font-size:13px;font-weight:bold;color:#2f84d8;line-height:18px">1</div>
<div class="ab" style="left:1500px;top:906px;font-size:13px;font-weight:bold;color:#303133;line-height:18px">2</div>
<div class="ab" style="left:1536px;top:906px;font-size:13px;font-weight:bold;color:#303133;line-height:18px">3</div>
<div class="ab" style="left:1571px;top:906px;font-size:13px;font-weight:bold;color:#303133;line-height:18px">4</div>
<div class="ab" style="left:1607px;top:906px;font-size:13px;font-weight:bold;color:#303133;line-height:18px">5</div>
<div class="ab" style="left:1642px;top:906px;font-size:13px;font-weight:bold;color:#303133;line-height:18px">6</div>
<div class="ab" style="left:1703px;top:906px;font-size:13px;font-weight:bold;color:#303133;line-height:18px">2033</div>
<div class="ab" style="left:1675px;top:906px;font-size:13px;font-weight:bold;color:#303133;line-height:18px">···</div>
<div class="ab" style="left:1752px;top:911px;width:7px;height:7px;border-right:1.3px solid #303133;border-top:1.3px solid #303133;transform:rotate(45deg)"></div>
<div class="ab" style="left:1796px;top:906px;font-size:13px;color:#606266;line-height:18px">前往</div>
<div class="inp" style="left:1827px;top:902px;width:46px;height:28px;line-height:26px;font-size:13px;text-align:center;padding:0">1</div>
<div class="ab" style="left:1876px;top:906px;font-size:13px;color:#606266;line-height:18px">页</div>
<div class="ab" style="left:1713px;top:756px;width:159px;height:120px;background:#fdf49a;border-radius:9px"></div>
<div class="ab" style="left:1722px;top:765px;width:142px;height:62px;border:1px solid #5a5a4a;border-radius:6px"></div>
<div class="ab" style="left:1735px;top:776px;font-size:15px;font-weight:bold;color:#111;line-height:20px">工单<br>待办:</div>
<div class="ab" style="left:1786px;top:776px;font-size:30px;color:#e01010;line-height:36px">0</div>
<div class="ab" style="left:1723px;top:836px;width:65px;height:32px;border:1px solid #5a5a4a;border-radius:6px"></div>
<div class="ab" style="left:1798px;top:836px;width:65px;height:32px;border:1px solid #5a5a4a;border-radius:6px"></div>
<div class="ab" style="left:1727px;top:844px;font-size:11px;color:#111;line-height:16px">延期:</div>
<div class="ab" style="left:1769px;top:840px;font-size:19px;color:#e01010;line-height:24px">0</div>
<div class="ab" style="left:1802px;top:844px;font-size:11px;color:#111;line-height:16px">回退:</div>
<div class="ab" style="left:1844px;top:840px;font-size:19px;color:#e01010;line-height:24px">0</div>
<div class="ab" style="left:0;top:942px;width:1912px;height:2px;background:#2b2f36"></div>
</body></html>
